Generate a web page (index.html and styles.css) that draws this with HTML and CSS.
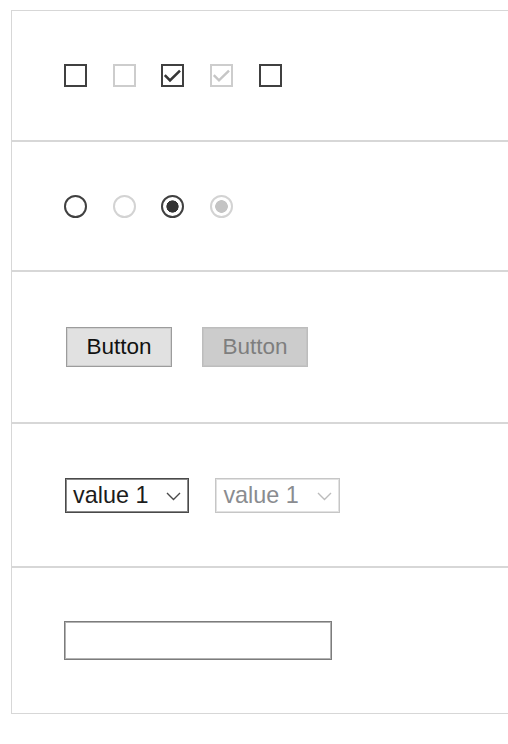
FILE: index.html
```html
<!DOCTYPE html>
<html lang="en">
<head>
<meta charset="utf-8">
<title>Form controls</title>
<link rel="stylesheet" href="styles.css">
</head>
<body>
<main class="panel">
  <section class="row row-check">
    <input type="checkbox" class="cb" aria-label="unchecked">
    <input type="checkbox" class="cb" disabled aria-label="disabled">
    <input type="checkbox" class="cb" checked aria-label="checked">
    <input type="checkbox" class="cb" checked disabled aria-label="checked disabled">
    <input type="checkbox" class="cb" aria-label="unchecked 2">
  </section>
  <section class="row row-radio">
    <input type="radio" class="rb" name="r1" aria-label="off">
    <input type="radio" class="rb" name="r2" disabled aria-label="off disabled">
    <input type="radio" class="rb" name="r3" checked aria-label="on">
    <input type="radio" class="rb" name="r4" checked disabled aria-label="on disabled">
  </section>
  <section class="row row-button">
    <button type="button" class="btn">Button</button>
    <button type="button" class="btn" disabled>Button</button>
  </section>
  <section class="row row-select">
    <div class="sel"><span class="sel-text">value 1</span><svg class="chev" width="15" height="9" viewBox="0 0 15 9"><path d="M1 1 L7.5 7.5 L14 1" fill="none" stroke="currentColor" stroke-width="1.4"/></svg></div>
    <div class="sel sel-dis"><span class="sel-text">value 1</span><svg class="chev" width="15" height="9" viewBox="0 0 15 9"><path d="M1 1 L7.5 7.5 L14 1" fill="none" stroke="currentColor" stroke-width="1.4"/></svg></div>
  </section>
  <section class="row row-input">
    <input type="text" class="txt" aria-label="text">
  </section>
</main>
</body>
</html>
```

FILE: styles.css
```css
html, body {
  margin: 0;
  padding: 0;
  background: #fff;
  overflow: hidden;
}
body {
  font-family: "Liberation Sans", Arial, sans-serif;
  color: #000;
}
.panel {
  margin: 10px 0 0 11px;
  display: flex;
  flex-direction: column;
}
.row {
  box-sizing: border-box;
  border: 1px solid #d7d7d7;
  border-right: none;
  display: flex;
  align-items: center;
  padding-left: 52px;
}
.row-check { height: 131px; gap: 25.7px; }
.row-radio { height: 130px; gap: 25.7px; }
.row-button { height: 152px; gap: 30px; }
.row-select { height: 144px; gap: 26.4px; }
.row-input { height: 147px; }

/* checkboxes */
.cb, .rb {
  -webkit-appearance: none;
  appearance: none;
  margin: 0;
  width: 23px;
  height: 23px;
  box-sizing: border-box;
  border: 2px solid #404040;
  background-color: #fff;
  flex: none;
}
.cb:disabled { border-color: #cdcdcd; }
.cb:checked {
  background-image: url("data:image/svg+xml,%3Csvg xmlns='http://www.w3.org/2000/svg' width='19' height='19' viewBox='0 0 19 19'%3E%3Cpath d='M1.8 9.2 L7 14.4 L17 4.6' fill='none' stroke='%23363636' stroke-width='2.6'/%3E%3C/svg%3E");
  background-repeat: no-repeat;
  background-position: center;
}
.cb:checked:disabled {
  background-image: url("data:image/svg+xml,%3Csvg xmlns='http://www.w3.org/2000/svg' width='19' height='19' viewBox='0 0 19 19'%3E%3Cpath d='M1.8 9.2 L7 14.4 L17 4.6' fill='none' stroke='%23c6c6c6' stroke-width='2.4'/%3E%3C/svg%3E");
}

/* radios */
.rb {
  border-radius: 50%;
  border: 2.4px solid #404040;
}
.rb:disabled { border-color: #d3d3d3; }
.rb:checked {
  background: radial-gradient(circle, #333 0 5.8px, #fff 6.4px);
}
.rb:checked:disabled {
  background: radial-gradient(circle, #c4c4c4 0 6px, #fff 6.6px);
}

/* buttons */
.btn {
  font-family: "Liberation Sans", Arial, sans-serif;
  font-size: 22.5px;
  width: 106px;
  height: 40px;
  margin: 0;
  padding: 0;
  background: #e1e1e1;
  border: 1px solid #9c9c9c;
  box-shadow: inset 0 0 0 1px #cfcfcf;
  color: #111;
}
.btn:first-child { margin-left: 2px; }
.btn:disabled {
  background: #cccccc;
  border-color: #bdbdbd;
  box-shadow: inset 0 0 0 1px #c4c4c4;
  color: #7e7e7e;
}

/* selects */
.sel {
  display: flex;
  align-items: center;
  justify-content: space-between;
  width: 124px;
  height: 35px;
  box-sizing: border-box;
  padding: 0 7px 0 7px;
  border: 1px solid #4a4a4a;
  box-shadow: inset 0 0 0 1px #8a8a8a;
  font-size: 23.4px;
  color: #1c1c1c;
}
.sel:first-child { margin-left: 1px; }
.sel .chev { color: #4a4a4a; margin-top: 3px; }
.sel-dis {
  width: 125px;
  border-color: #c6c6c6;
  box-shadow: inset 0 0 0 1px #e2e2e2;
  color: #8a8c90;
}
.sel-dis .chev { color: #bcbcbc; }

/* text input */
.txt {
  margin: 0;
  width: 268px;
  height: 39px;
  box-sizing: border-box;
  border: 1px solid #7c7c7c;
  box-shadow: inset 0 0 0 1px #b3b3b3;
  padding: 0;
  background: #fff;
}
```
